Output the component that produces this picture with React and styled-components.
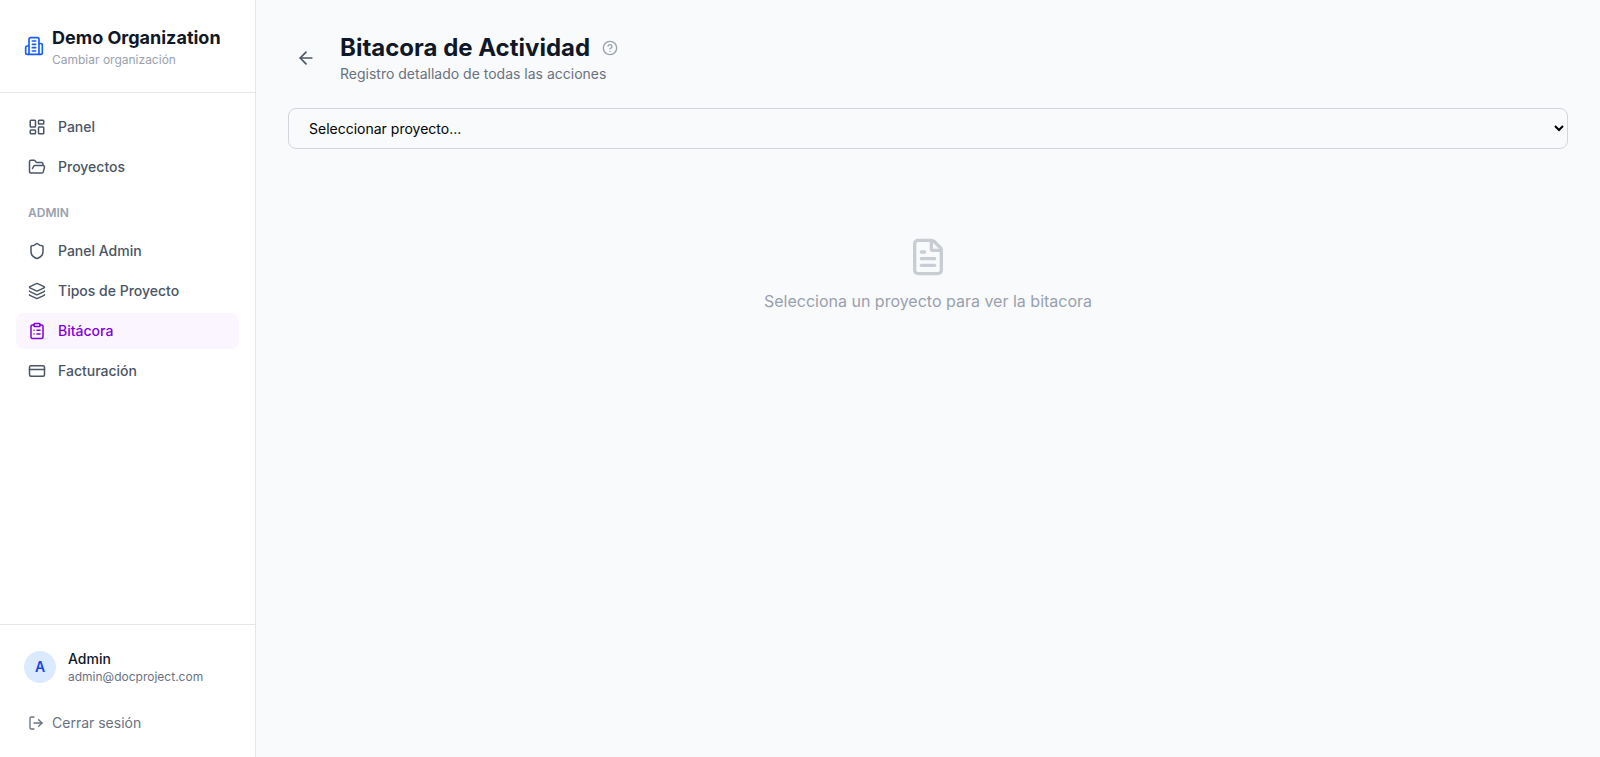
import React, { useState } from 'react';
import styled, { createGlobalStyle } from 'styled-components';
import {
  ArrowLeft,
  CircleHelp,
  ClipboardList,
  CreditCard,
  FileText,
  FolderOpen,
  Layers,
  LayoutDashboard,
  LogOut,
  Shield,
} from 'lucide-react';

const mainLinks = [
  { id: 'panel', label: 'Panel', icon: LayoutDashboard },
  { id: 'proyectos', label: 'Proyectos', icon: FolderOpen },
];

const adminLinks = [
  { id: 'admin', label: 'Panel Admin', icon: Shield },
  { id: 'tipos', label: 'Tipos de Proyecto', icon: Layers },
  { id: 'bitacora', label: 'Bitácora', icon: ClipboardList },
  { id: 'facturacion', label: 'Facturación', icon: CreditCard },
];

const BuildingIcon = () => (
  <svg
    width="20"
    height="20"
    viewBox="0 0 24 24"
    fill="none"
    stroke="currentColor"
    strokeWidth="2"
    strokeLinecap="round"
    strokeLinejoin="round"
    aria-hidden="true"
  >
    <path d="M6 22V4a2 2 0 0 1 2-2h8a2 2 0 0 1 2 2v18Z" />
    <path d="M6 12H4a2 2 0 0 0-2 2v6a2 2 0 0 0 2 2h2" />
    <path d="M18 9h2a2 2 0 0 1 2 2v9a2 2 0 0 1-2 2h-2" />
    <path d="M10 6h4" />
    <path d="M10 10h4" />
    <path d="M10 14h4" />
    <path d="M10 18h4" />
  </svg>
);

const NavItem = ({ link, active }) => {
  const Icon = link.icon;

  return (
    <li>
      <NavLink href={`#${link.id}`} $active={active} aria-current={active ? 'page' : undefined}>
        <Icon size={18} />
        {link.label}
      </NavLink>
    </li>
  );
};

const App = () => {
  const [project, setProject] = useState('');

  return (
    <Layout>
      <GlobalStyle />
      <Sidebar>
        <Brand href="#organizacion">
          <BuildingIcon />
          <div>
            <BrandName>Demo Organization</BrandName>
            <BrandHint>Cambiar organización</BrandHint>
          </div>
        </Brand>

        <Nav>
          <NavList>
            {mainLinks.map((link) => (
              <NavItem key={link.id} link={link} />
            ))}
          </NavList>
          <NavTitle>Admin</NavTitle>
          <NavList>
            {adminLinks.map((link) => (
              <NavItem key={link.id} link={link} active={link.id === 'bitacora'} />
            ))}
          </NavList>
        </Nav>

        <Account>
          <User>
            <Avatar>A</Avatar>
            <div>
              <UserName>Admin</UserName>
              <UserEmail>admin@docproject.com</UserEmail>
            </div>
          </User>
          <LogoutButton type="button">
            <LogOut size={16} />
            Cerrar sesión
          </LogoutButton>
        </Account>
      </Sidebar>

      <Main>
        <Header>
          <BackButton type="button" aria-label="Volver">
            <ArrowLeft size={20} />
          </BackButton>
          <div>
            <TitleRow>
              <Title>Bitacora de Actividad</Title>
              <HelpButton type="button" aria-label="Ayuda">
                <CircleHelp size={16} />
              </HelpButton>
            </TitleRow>
            <Subtitle>Registro detallado de todas las acciones</Subtitle>
          </div>
        </Header>

        <ProjectSelect
          aria-label="Proyecto"
          value={project}
          onChange={(e) => setProject(e.target.value)}
        >
          <option value="">Seleccionar proyecto...</option>
        </ProjectSelect>

        <Empty>
          <FileText size={40} />
          <p>Selecciona un proyecto para ver la bitacora</p>
        </Empty>
      </Main>
    </Layout>
  );
};

export default App;

const GlobalStyle = createGlobalStyle`
  *, *::before, *::after {
    box-sizing: border-box;
  }
  body {
    margin: 0;
    background: #f9fafb;
    color: #101828;
    font-family: Inter, sans-serif;
    font-size: 16px;
    line-height: 24px;
    -webkit-font-smoothing: antialiased;
  }
  h1, h2, p, ul {
    margin: 0;
    padding: 0;
  }
  button, select {
    font-family: inherit;
  }
  svg {
    display: block;
    flex-shrink: 0;
  }
`;

const Layout = styled.div`
  display: flex;
  min-height: 100vh;
`;

const Sidebar = styled.aside`
  display: flex;
  flex-direction: column;
  flex-shrink: 0;
  width: 256px;
  background: #fff;
  border-right: 1px solid #e5e7eb;
`;

const Brand = styled.a`
  display: flex;
  align-items: center;
  gap: 8px;
  padding: 24px;
  border-bottom: 1px solid #e5e7eb;
  color: #155dfc;
  text-decoration: none;
`;

const BrandName = styled.p`
  color: #101828;
  font-size: 18px;
  font-weight: 700;
  line-height: 28px;
`;

const BrandHint = styled.p`
  color: #99a1af;
  font-size: 12px;
  line-height: 16px;
`;

const Nav = styled.nav`
  flex: 1;
  padding: 16px;
`;

const NavList = styled.ul`
  display: flex;
  flex-direction: column;
  gap: 4px;
  list-style: none;
`;

const NavTitle = styled.h2`
  padding: 20px 12px 12px;
  color: #99a1af;
  font-size: 12px;
  font-weight: 600;
  line-height: 16px;
  text-transform: uppercase;
`;

const NavLink = styled.a`
  display: flex;
  align-items: center;
  gap: 12px;
  padding: 8px 12px;
  border-radius: 8px;
  background: ${({ $active }) => ($active ? '#faf5ff' : 'transparent')};
  color: ${({ $active }) => ($active ? '#8200db' : '#4a5565')};
  font-size: 14px;
  font-weight: 500;
  line-height: 20px;
  text-decoration: none;
`;

const Account = styled.div`
  padding: 16px;
  border-top: 1px solid #e5e7eb;
`;

const User = styled.div`
  display: flex;
  align-items: center;
  gap: 12px;
  padding: 8px;
  margin-bottom: 12px;
`;

const Avatar = styled.span`
  display: flex;
  align-items: center;
  justify-content: center;
  width: 32px;
  height: 32px;
  border-radius: 50%;
  background: #dbeafe;
  color: #1447e6;
  font-size: 14px;
  font-weight: 600;
`;

const UserName = styled.p`
  font-size: 14px;
  font-weight: 500;
  line-height: 20px;
`;

const UserEmail = styled.p`
  color: #6a7282;
  font-size: 12px;
  line-height: 16px;
`;

const LogoutButton = styled.button`
  display: flex;
  align-items: center;
  gap: 8px;
  width: 100%;
  padding: 8px 12px;
  border: 0;
  border-radius: 8px;
  background: none;
  color: #6a7282;
  font-size: 14px;
  line-height: 20px;
  cursor: pointer;
`;

const Main = styled.main`
  flex: 1;
  min-width: 0;
  padding: 32px;
`;

const Header = styled.header`
  display: flex;
  align-items: center;
  gap: 16px;
  margin-bottom: 24px;
`;

const BackButton = styled.button`
  padding: 8px;
  border: 0;
  border-radius: 8px;
  background: none;
  color: #4a5565;
  cursor: pointer;
`;

const TitleRow = styled.div`
  display: flex;
  align-items: center;
  gap: 12px;
`;

const Title = styled.h1`
  font-size: 24px;
  font-weight: 700;
  line-height: 32px;
`;

const HelpButton = styled.button`
  padding: 0;
  border: 0;
  background: none;
  color: #99a1af;
  cursor: pointer;
`;

const Subtitle = styled.p`
  color: #6a7282;
  font-size: 14px;
  line-height: 20px;
`;

const ProjectSelect = styled.select`
  display: block;
  width: 100%;
  height: 41px;
  padding: 0 16px;
  border: 1px solid #d1d5dc;
  border-radius: 8px;
  background: transparent;
  color: #000;
  font-size: 14px;
`;

const Empty = styled.div`
  display: flex;
  flex-direction: column;
  align-items: center;
  gap: 12px;
  padding: 88px 0;
  color: #99a1af;

  & svg {
    opacity: 0.5;
  }
`;
